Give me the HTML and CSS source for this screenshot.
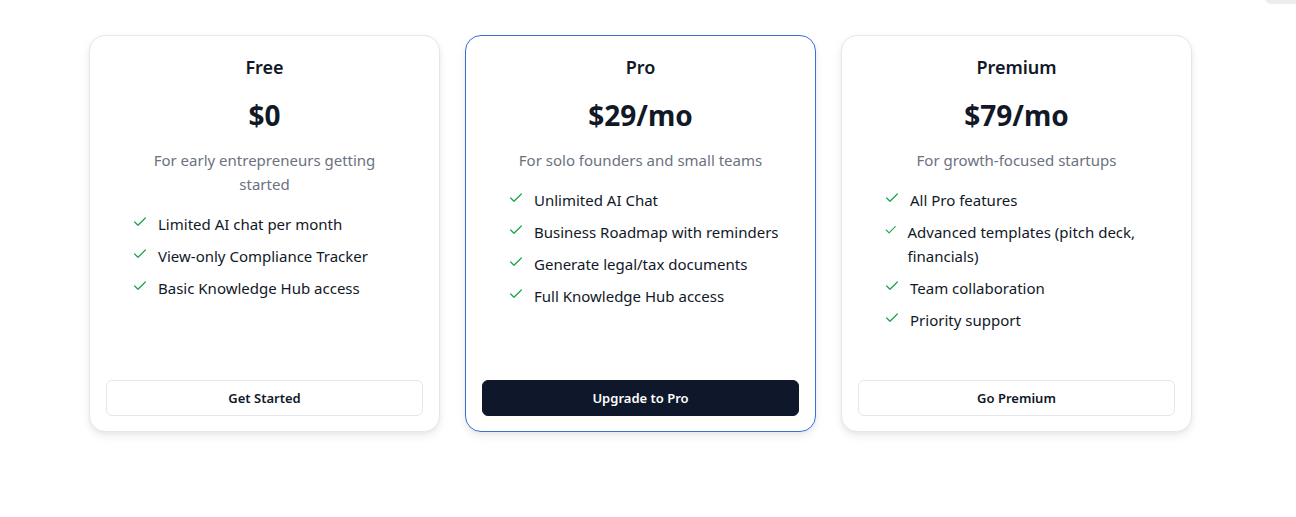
FILE: index.html
```html
<!DOCTYPE html>
<html lang="en">
<head>
<meta charset="utf-8">
<title>Pricing</title>
<link rel="stylesheet" href="styles.css">
</head>
<body>
<main class="pricing">
  <section class="card">
    <div class="card-body">
      <h2 class="plan">Free</h2>
      <div class="price">$0</div>
      <p class="desc">For early entrepreneurs getting started</p>
      <ul class="features">
        <li><svg viewBox="0 0 24 24"><path d="M20 6 9 17l-5-5"/></svg><span>Limited AI chat per month</span></li>
        <li><svg viewBox="0 0 24 24"><path d="M20 6 9 17l-5-5"/></svg><span>View-only Compliance Tracker</span></li>
        <li><svg viewBox="0 0 24 24"><path d="M20 6 9 17l-5-5"/></svg><span>Basic Knowledge Hub access</span></li>
      </ul>
    </div>
    <button class="btn btn-outline">Get Started</button>
  </section>
  <section class="card card-featured">
    <div class="card-body">
      <h2 class="plan">Pro</h2>
      <div class="price">$29/mo</div>
      <p class="desc">For solo founders and small teams</p>
      <ul class="features">
        <li><svg viewBox="0 0 24 24"><path d="M20 6 9 17l-5-5"/></svg><span>Unlimited AI Chat</span></li>
        <li><svg viewBox="0 0 24 24"><path d="M20 6 9 17l-5-5"/></svg><span>Business Roadmap with reminders</span></li>
        <li><svg viewBox="0 0 24 24"><path d="M20 6 9 17l-5-5"/></svg><span>Generate legal/tax documents</span></li>
        <li><svg viewBox="0 0 24 24"><path d="M20 6 9 17l-5-5"/></svg><span>Full Knowledge Hub access</span></li>
      </ul>
    </div>
    <button class="btn btn-dark">Upgrade to Pro</button>
  </section>
  <section class="card">
    <div class="card-body">
      <h2 class="plan">Premium</h2>
      <div class="price">$79/mo</div>
      <p class="desc">For growth-focused startups</p>
      <ul class="features">
        <li><svg viewBox="0 0 24 24"><path d="M20 6 9 17l-5-5"/></svg><span>All Pro features</span></li>
        <li><svg viewBox="0 0 24 24"><path d="M20 6 9 17l-5-5"/></svg><span>Advanced templates (pitch deck, financials)</span></li>
        <li><svg viewBox="0 0 24 24"><path d="M20 6 9 17l-5-5"/></svg><span>Team collaboration</span></li>
        <li><svg viewBox="0 0 24 24"><path d="M20 6 9 17l-5-5"/></svg><span>Priority support</span></li>
      </ul>
    </div>
    <button class="btn btn-outline">Go Premium</button>
  </section>
</main>
<div class="corner"></div>
</body>
</html>
```

FILE: styles.css
```css
* { box-sizing: border-box; }
html, body { margin: 0; padding: 0; background: #ffffff; }
body {
  font-family: "Noto Sans", "Open Sans", "Liberation Sans", sans-serif;
  color: #111827;
  position: relative;
  height: 517px;
  overflow: hidden;
}
.pricing {
  display: grid;
  grid-template-columns: repeat(3, 351px);
  column-gap: 25px;
  padding: 35px 0 0 89px;
}
.card {
  height: 397px;
  border: 1px solid #e5e7eb;
  border-radius: 16px;
  background: #fff;
  box-shadow: 0 4px 10px rgba(0,0,0,0.07), 0 2px 4px rgba(0,0,0,0.04);
  padding: 16px 16px 15px;
  display: flex;
  flex-direction: column;
}
.card-featured { border-color: #3b6fd8; }
.card-body {
  flex: 1;
  padding: 0 26px;
  display: flex;
  flex-direction: column;
  align-items: center;
}
.plan {
  margin: 1px 0 0;
  font-size: 18px;
  line-height: 28px;
  font-weight: 600;
}
.price {
  margin-top: 16px;
  font-size: 28px;
  line-height: 36px;
  font-weight: 700;
}
.desc {
  margin: 15px 0 0;
  font-size: 15px;
  line-height: 24px;
  color: #6b7280;
  text-align: center;
}
.features {
  list-style: none;
  margin: 16px -14px 0 0;
  padding: 0;
  align-self: stretch;
  display: flex;
  flex-direction: column;
  gap: 8px;
}
.features li {
  display: flex;
  align-items: flex-start;
  gap: 10px;
  font-size: 15px;
  line-height: 24px;
}
.features svg {
  width: 16px;
  height: 16px;
  margin-top: 2px;
  fill: none;
  stroke: #22a652;
  stroke-width: 2;
  stroke-linecap: round;
  stroke-linejoin: round;
}
.btn {
  height: 36px;
  width: 100%;
  border-radius: 6px;
  font-family: inherit;
  font-size: 13px;
  font-weight: 600;
  cursor: pointer;
}
.btn-outline {
  background: #fff;
  border: 1px solid #e5e7eb;
  color: #111827;
}
.btn-dark {
  background: #0f172a;
  border: 1px solid #0f172a;
  color: #fff;
}
.corner {
  position: absolute;
  top: -12px;
  right: -20px;
  width: 52px;
  height: 16px;
  border-radius: 8px;
  background: #ececec;
}
```
